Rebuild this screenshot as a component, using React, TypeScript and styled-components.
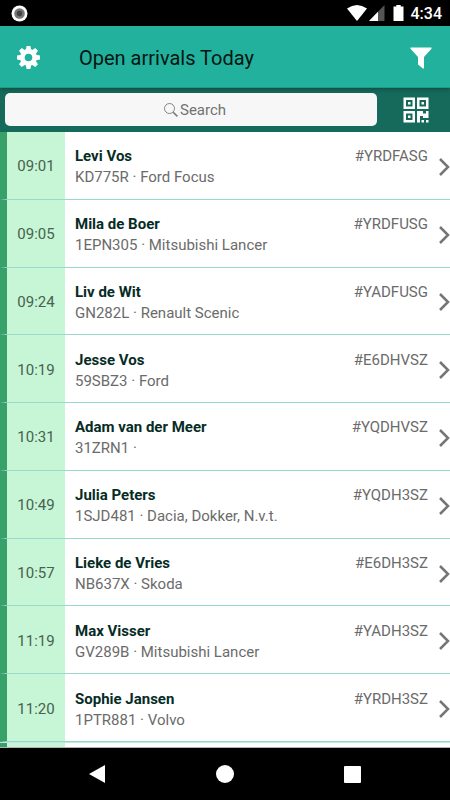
import React from "react";
import styled, { createGlobalStyle } from "styled-components";

const GlobalStyle = createGlobalStyle`
  * { box-sizing: border-box; }
  body { margin: 0; font-family: Roboto, "Liberation Sans", sans-serif; background: #000; }
  button, input { font: inherit; border: 0; padding: 0; background: none; }
`;

const Screen = styled.div`
  display: flex;
  flex-direction: column;
  min-height: 100vh;
  background: #fff;
`;

const StatusBar = styled.div`
  display: flex;
  align-items: center;
  height: 26px;
  padding: 0 8px 0 11px;
  background: #000;
  color: #fff;
`;

const StatusIcons = styled.svg`
  margin-left: auto;
`;

const Clock = styled.time`
  margin-left: 7px;
  padding-top: 2px;
  font-size: 16px;
  line-height: 24px;
  font-weight: 500;
`;

const Header = styled.header`
  position: relative;
  z-index: 1;
  display: flex;
  align-items: center;
  height: 62px;
  padding: 2px 18px 0 16px;
  background: #21b19d;
  border-bottom: 1px solid #1b9a88;
  box-shadow: 0 1px 4px rgba(0, 0, 0, 0.35);
`;

const Title = styled.h1`
  flex: 1;
  margin: 0 0 0 38px;
  font-size: 20px;
  line-height: 24px;
  font-weight: 400;
  color: #041512;
`;

const IconButton = styled.button`
  display: flex;
  color: #fff;
  cursor: pointer;
`;

const SearchBar = styled.div`
  display: flex;
  align-items: center;
  height: 44px;
  padding: 5px 21px 6px 5px;
  background: #166a5b;
`;

const SearchField = styled.label`
  display: flex;
  flex: 1;
  align-items: center;
  justify-content: center;
  gap: 2px;
  height: 33px;
  margin-right: 26px;
  padding-left: 10px;
  border-radius: 5px;
  background: #f7f7f7;
`;

const SearchInput = styled.input`
  width: 48px;
  font-size: 15px;
  line-height: 20px;
  color: #555;
  outline: none;
  &::placeholder { color: #727272; opacity: 1; }
`;

const Arrivals = styled.ul`
  display: grid;
  grid-auto-rows: 1fr;
  flex: 1;
  margin: 0;
  padding: 0;
  list-style: none;
`;

const Arrival = styled.li`
  display: flex;
  min-height: 64px;
  border-left: 7px solid #38a169;
  border-bottom: 1px solid #99d8cc;
`;

const Time = styled.time`
  display: flex;
  align-items: center;
  justify-content: center;
  width: 58px;
  padding-top: 2px;
  background: #c6f6d5;
  font-size: 15px;
  color: #49614f;
`;

const Details = styled.div`
  flex: 1;
  align-self: center;
  margin-left: 10px;
  padding-top: 4px;
  font-size: 15px;
  line-height: 21px;
  color: #6b6b6b;
`;

const Line = styled.div`
  display: flex;
  justify-content: space-between;
`;

const Name = styled.span`
  font-weight: 700;
  color: #062c25;
`;

const Vehicle = styled.div``;

const Code = styled.span``;

const OpenButton = styled(IconButton)`
  align-self: center;
  margin: 3px 0 0 10px;
  color: #757575;
`;

const ListEnd = styled.div`
  height: 6px;
  border-top: 1px solid #bfe9e0;
  border-bottom: 1px solid #b4b4b4;
  background: linear-gradient(90deg, #38a169 7px, #c6f6d5 7px 65px, #fff 65px);
`;

const NavBar = styled.nav`
  display: flex;
  align-items: center;
  justify-content: space-around;
  height: 52px;
  padding: 0 34px;
  background: #000;
`;

const NavButton = styled(IconButton)`
  justify-content: center;
  width: 20px;
`;

const arrivals = [
  ["09:01", "Levi Vos", "KD775R · Ford Focus", "#YRDFASG"],
  ["09:05", "Mila de Boer", "1EPN305 · Mitsubishi Lancer", "#YRDFUSG"],
  ["09:24", "Liv de Wit", "GN282L · Renault Scenic", "#YADFUSG"],
  ["10:19", "Jesse Vos", "59SBZ3 · Ford", "#E6DHVSZ"],
  ["10:31", "Adam van der Meer", "31ZRN1 ·", "#YQDHVSZ"],
  ["10:49", "Julia Peters", "1SJD481 · Dacia, Dokker, N.v.t.", "#YQDH3SZ"],
  ["10:57", "Lieke de Vries", "NB637X · Skoda", "#E6DH3SZ"],
  ["11:19", "Max Visser", "GV289B · Mitsubishi Lancer", "#YADH3SZ"],
  ["11:20", "Sophie Jansen", "1PTR881 · Volvo", "#YRDH3SZ"],
];

const Gear = () => (
  <svg width="25" height="25" viewBox="0 0 25 25" aria-hidden="true">
    <g fill="currentColor">
      {[0, 45, 90, 135].map((a) => (
        <path key={a} d="M10.6 1h3.8l.9 4.5v14l-.9 4.5h-3.8l-.9-4.5v-14z" transform={`rotate(${a} 12.5 12.5)`} />
      ))}
      <circle cx="12.5" cy="12.5" r="8.5" />
    </g>
    <circle cx="12.5" cy="12.5" r="3.8" fill="#21b19d" />
  </svg>
);

const Funnel = () => (
  <svg width="22" height="22" viewBox="0 0 22 22" fill="currentColor" aria-hidden="true">
    <path d="M.5.5h21v1.2L14 10v11.5h-1.2L8 17.5V10L.5 1.7z" />
  </svg>
);

const QrCode = () => (
  <svg width="26" height="26" viewBox="0 0 26 26" fill="currentColor" fillRule="evenodd" aria-hidden="true">
    <path d="M.5.5h11.5v11.5H.5zM3 3v6.5h6.5V3zM5 5h2.5v2.5H5zM14 .5h11.5v11.5H14zM16.5 3v6.5H23V3zM18.5 5H21v2.5h-2.5zM.5 14h11.5v11.5H.5zM3 16.5V23h6.5v-6.5zM5 18.5h2.5V21H5z" />
    <path d="M14 14h6v2.500h3V14h2.500v7H20v-2h-3v6.500h-3zM18.500 23H21v2.500h-2.500zM23 23h2.500v2.500H23z" />
  </svg>
);

const Magnifier = () => (
  <svg width="14" height="14" viewBox="0 0 14 14" fill="none" stroke="#777" aria-hidden="true">
    <circle cx="5.5" cy="5.5" r="5" strokeWidth=".9" />
    <path d="M9.2 9.2l4.200 4.200" strokeWidth="1.5" />
  </svg>
);

const Chevron = () => (
  <svg width="12" height="18" viewBox="0 0 12 18" fill="none" stroke="currentColor" strokeWidth="2.5" aria-hidden="true">
    <path d="M2 1l8 8-8 8" />
  </svg>
);

export default function App() {
  return (
    <Screen>
      <GlobalStyle />
      <StatusBar>
        <svg width="17" height="17" viewBox="0 0 17 17" aria-hidden="true">
          <circle cx="8.5" cy="8.5" r="8" fill="#fff" />
          <circle cx="8.5" cy="8.5" r="5.3" fill="#777" />
          <circle cx="8.5" cy="8.5" r="2.7" fill="#444" />
        </svg>
        <StatusIcons width="57" height="18" viewBox="0 0 57 18" aria-hidden="true">
          <path d="M0 4.500Q10-2.500 20 4.500L10 17z" fill="#fff" />
          <path d="M22 17L37.500 1v16z" fill="#555" />
          <path d="M22 17l9-9.300V17z" fill="#fff" />
          <path d="M46.500 2.500h2.800V1h4.400v1.500h2.800V17h-10z" fill="#fff" />
        </StatusIcons>
        <Clock>4:34</Clock>
      </StatusBar>
      <Header>
        <IconButton aria-label="Settings"><Gear /></IconButton>
        <Title>Open arrivals Today</Title>
        <IconButton aria-label="Filter"><Funnel /></IconButton>
      </Header>
      <SearchBar>
        <SearchField>
          <Magnifier />
          <SearchInput type="text" placeholder="Search" aria-label="Search" />
        </SearchField>
        <IconButton aria-label="Scan QR code"><QrCode /></IconButton>
      </SearchBar>
      <Arrivals>
        {arrivals.map(([time, name, vehicle, code]) => (
          <Arrival key={time}>
            <Time>{time}</Time>
            <Details>
              <Line>
                <Name>{name}</Name>
                <Code>{code}</Code>
              </Line>
              <Vehicle>{vehicle}</Vehicle>
            </Details>
            <OpenButton aria-label={`Open ${name}`}><Chevron /></OpenButton>
          </Arrival>
        ))}
      </Arrivals>
      <ListEnd />
      <NavBar>
        <NavButton aria-label="Back">
          <svg width="17" height="18" viewBox="0 0 17 18" fill="currentColor"><path d="M16 0v18L0 9z" /></svg>
        </NavButton>
        <NavButton aria-label="Home">
          <svg width="18" height="18" viewBox="0 0 18 18" fill="currentColor"><circle cx="9" cy="9" r="9" /></svg>
        </NavButton>
        <NavButton aria-label="Recent apps">
          <svg width="17" height="17" viewBox="0 0 17 17" fill="currentColor"><rect width="17" height="17" rx="1" /></svg>
        </NavButton>
      </NavBar>
    </Screen>
  );
}
